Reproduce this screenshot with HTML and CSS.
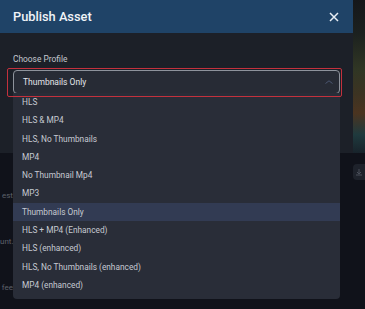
FILE: index.html
```html
<!DOCTYPE html>
<html lang="en">
<head>
    <meta charset="UTF-8">
    <meta name="viewport" content="width=device-width, initial-scale=1.0">
    <title>Publish Asset</title>
    <link rel="stylesheet" href="styles.css">
</head>
<body>
    <!-- Page behind the dialog -->
    <div class="page">
        <div class="side">
            <div class="side-cell">est</div>
            <div class="side-cell">unt.</div>
            <div class="side-cell">fee</div>
        </div>
        <div class="gap"></div>
        <div class="aside">
            <div class="hero"></div>
            <div class="tool-btn">
                <svg width="8" height="8" viewBox="0 0 8 8"><path d="M4 1v5M2 4l2 2 2-2M1 7h6" fill="none" stroke="#4a4f5a" stroke-width="1"/></svg>
            </div>
        </div>
    </div>

    <!-- Dialog -->
    <div class="modal">
        <div class="modal-header">
            <span class="modal-title">Publish Asset</span>
            <svg class="close" width="10" height="10" viewBox="0 0 10 10"><path d="M1 1l8 8M9 1l-8 8" stroke="#e9eef4" stroke-width="1.5"/></svg>
        </div>
        <div class="modal-body">
            <div class="label">Choose Profile</div>
            <div class="focus-ring">
                <div class="select">
                    <span class="select-value">Thumbnails Only</span>
                    <svg width="8" height="4" viewBox="0 0 8 4"><path d="M0.5 3.5L4 0.8l3.5 2.7" fill="none" stroke="#4b5772" stroke-width="1"/></svg>
                    <ul class="menu">
                        <li>HLS</li>
                        <li>HLS &amp; MP4</li>
                        <li>HLS, No Thumbnails</li>
                        <li>MP4</li>
                        <li>No Thumbnail Mp4</li>
                        <li>MP3</li>
                        <li class="active">Thumbnails Only</li>
                        <li>HLS + MP4 (Enhanced)</li>
                        <li>HLS (enhanced)</li>
                        <li>HLS, No Thumbnails (enhanced)</li>
                        <li>MP4 (enhanced)</li>
                    </ul>
                </div>
            </div>
        </div>
    </div>
</body>
</html>
```

FILE: styles.css
```css
body {
    margin: 0;
    width: 365px;
    height: 309px;
    overflow: hidden;
    background: #10121a;
    font-family: Roboto, "Liberation Sans", sans-serif;
}

.page {
    display: grid;
    grid-template-columns: 13px 1fr 12px;
    height: 309px;
}

.side {
    display: flex;
    flex-direction: column;
    gap: 34px;
    padding-top: 190px;
}
.side-cell {
    text-align: right;
    white-space: nowrap;
    font-size: 8px;
    line-height: 12px;
    color: #5d616a;
}

.aside {
    display: flex;
    flex-direction: column;
}
.hero {
    height: 153px;
    background: linear-gradient(to bottom, #15171a 0%, #1c211f 22%, #303624 45%, #3d3322 62%, #4b3420 74%, #1f3a3e 88%, #18232b 100%);
}
.tool-btn {
    margin-top: 11px;
    width: 20px;
    height: 16px;
    border-radius: 4px;
    background: #1e222b;
    display: flex;
    align-items: center;
    padding-left: 2px;
}

.modal {
    position: absolute;
    left: 0;
    top: 0;
    width: 353px;
    height: 153px;
    background: #1c2028;
}
.modal-header {
    height: 33px;
    background: #1f4367;
    display: flex;
    align-items: center;
    justify-content: space-between;
    padding: 0 14px 0 13px;
}
.modal-title {
    color: #f0f3f7;
    font-size: 12.8px;
    font-weight: 500;
}

.modal-body {
    padding: 20px 11px 0 7px;
}
.label {
    padding-left: 6px;
    font-size: 8.4px;
    line-height: 12px;
    color: #c3c7ce;
    margin-bottom: 2.5px;
}
.focus-ring {
    position: relative;
    padding: 2px 2.5px 2.5px 5.5px;
}
/* red validation ring drawn above the open menu */
.focus-ring::after {
    content: "";
    position: absolute;
    inset: 0;
    border: 1.5px solid #c3313d;
    border-radius: 2px;
    z-index: 2;
    pointer-events: none;
}
.select {
    position: relative;
    height: 24.5px;
    box-sizing: border-box;
    border: 1px solid #8e939c;
    border-radius: 4px;
    background: #272b35;
    display: flex;
    align-items: center;
    justify-content: space-between;
    padding: 0 6px 0 9.5px;
}
.select-value {
    color: #e3e5e9;
    font-size: 8.5px;
}

.menu {
    position: absolute;
    z-index: 1;
    top: 100%;
    left: -0.5px;
    width: 326.5px;
    margin: 0;
    padding: 0 0 5px;
    list-style: none;
    background: #292d38;
    border-radius: 0 0 4px 4px;
}
.menu li {
    box-sizing: border-box;
    height: 18.3px;
    line-height: 17.3px;
    padding: 1px 0 0 9px;
    font-size: 8.3px;
    color: #c6cad2;
}
.menu li.active {
    background: #323b53;
}
```
